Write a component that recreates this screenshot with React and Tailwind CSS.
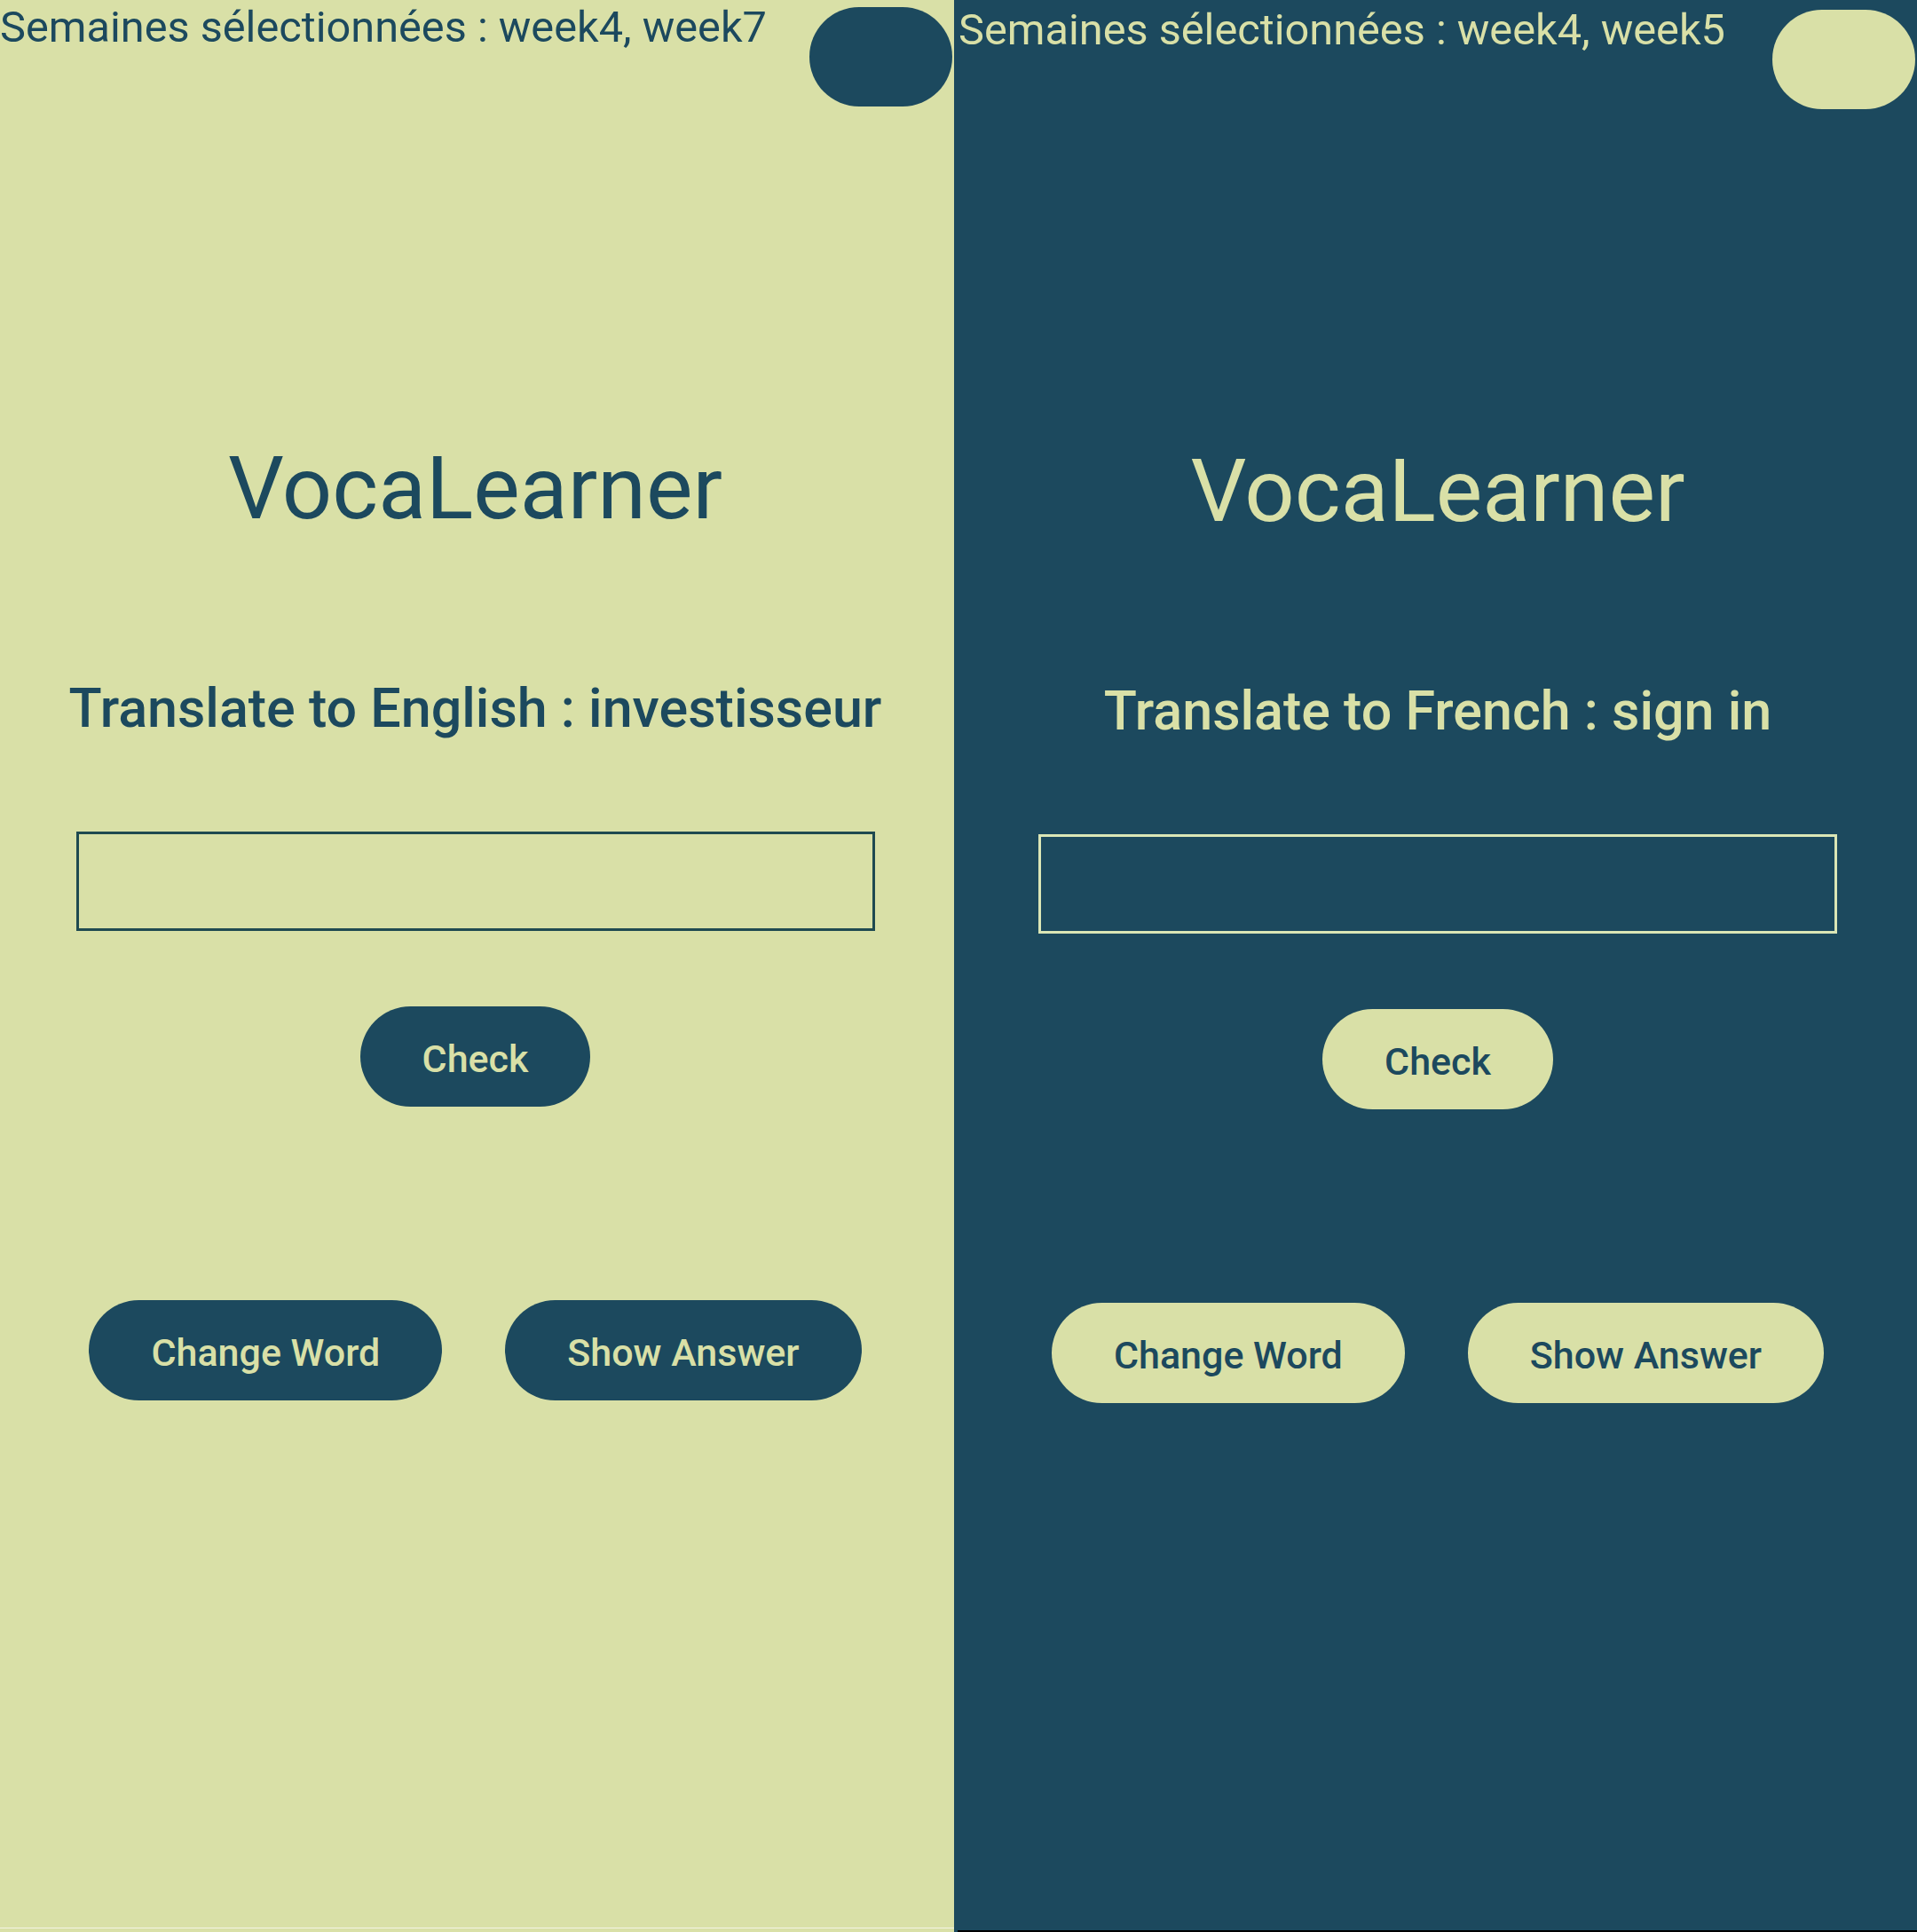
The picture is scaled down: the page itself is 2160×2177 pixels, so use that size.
import React from 'react';

const themes = {
  light: {
    bg: 'bg-[#d9e0a7]',
    text: 'text-[#1c495e]',
    pill: 'bg-[#1c495e]',
    pillText: 'text-[#d9e0a7]',
    input: 'border-[#1f4a50]',
    menuOffset: 'mr-[-2px]',
  },
  dark: {
    bg: 'bg-[#1c495e]',
    text: 'text-[#d9e0a7]',
    pill: 'bg-[#d9e0a7]',
    pillText: 'text-[#1c495e]',
    input: 'border-[#dbe6b6]',
    menuOffset: 'mr-[2px]',
  },
};

const PillButton = ({ t, children }) => (
  <button
    className={`h-[113px] px-[70px] pt-[5px] rounded-full ${t.pill} ${t.pillText} text-[43px] font-medium leading-none`}
  >
    {children}
  </button>
);

const QuizScreen = ({ theme, weeks, prompt }) => {
  const t = themes[theme];
  return (
    <div className="flex flex-col">
      {/* Top bar: selected weeks + menu pill */}
      <div className="flex items-start justify-between">
        <span className={`mt-[7px] text-[48.7px] leading-none ${t.text}`}>
          Semaines sélectionnées : {weeks}
        </span>
        <div className={`mt-[8px] ${t.menuOffset} w-[161px] h-[112px] rounded-full ${t.pill}`} />
      </div>

      <h1 className={`mt-[381px] text-center text-[99px] leading-none ${t.text}`}>VocaLearner</h1>

      <p className={`mt-[168px] text-center text-[61px] font-medium leading-none ${t.text}`}>{prompt}</p>

      <input
        type="text"
        className={`mt-[108px] mx-auto w-[900px] h-[112px] border-[3px] ${t.input} bg-transparent outline-none`}
      />

      <div className="mt-[85px] flex justify-center">
        <PillButton t={t}>Check</PillButton>
      </div>

      <div className="mt-[218px] flex justify-center gap-[71px]">
        <PillButton t={t}>Change Word</PillButton>
        <PillButton t={t}>Show Answer</PillButton>
      </div>
    </div>
  );
};

export default function App() {
  return (
    <div className="flex h-[2177px] w-[2160px] overflow-hidden font-['Roboto',sans-serif]">
      <div className="relative w-[1075px] bg-[#d9e0a7] pr-[4px]">
        <QuizScreen theme="light" weeks="week4, week7" prompt="Translate to English : investisseur" />
        <div className="absolute left-0 right-0 top-[2172px] h-px bg-[#f4f4e4]" />
      </div>
      <div className="relative flex-1 bg-[#1c495e] pl-[5px] pt-[3px]">
        <QuizScreen theme="dark" weeks="week4, week5" prompt="Translate to French : sign in" />
        <div className="absolute left-[4px] right-0 bottom-0 h-[2px] bg-black" />
      </div>
    </div>
  );
}
